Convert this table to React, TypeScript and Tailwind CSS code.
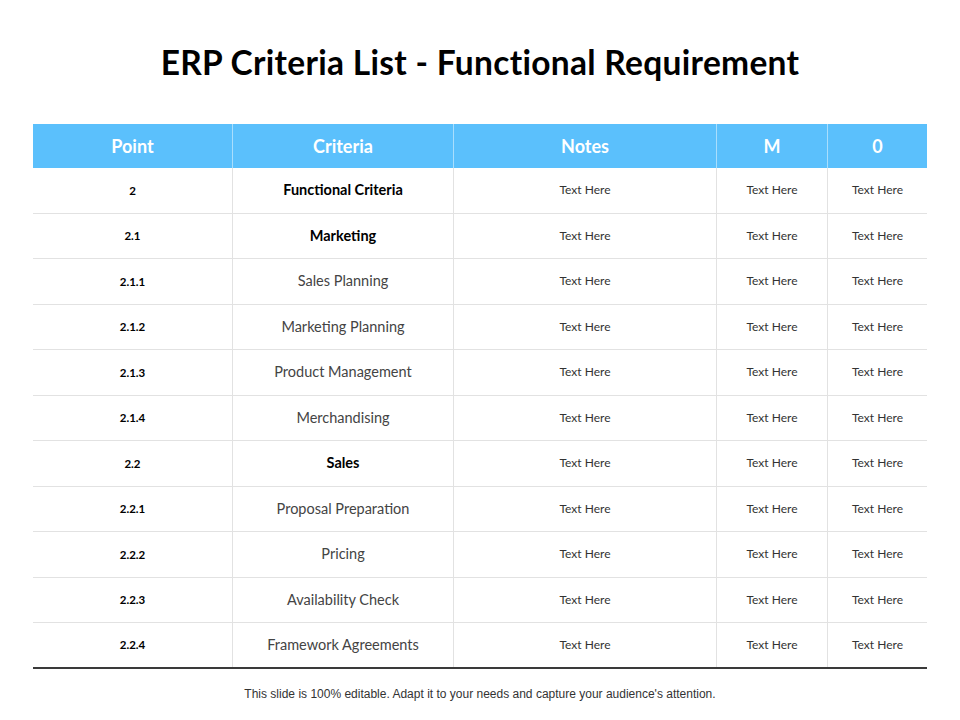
const rows: [string, string, boolean][] = [
  ["2", "Functional Criteria", true],
  ["2.1", "Marketing", true],
  ["2.1.1", "Sales Planning", false],
  ["2.1.2", "Marketing Planning", false],
  ["2.1.3", "Product Management", false],
  ["2.1.4", "Merchandising", false],
  ["2.2", "Sales", true],
  ["2.2.1", "Proposal Preparation", false],
  ["2.2.2", "Pricing", false],
  ["2.2.3", "Availability Check", false],
  ["2.2.4", "Framework Agreements", false],
]

const headers = ["Point", "Criteria", "Notes", "M", "0"]

export default function App() {
  return (
    <div className="w-[960px] h-[720px] bg-white flex flex-col items-center font-['Lato',sans-serif]">
      <h1 className="mt-[40px] h-[44px] flex items-center text-[33.5px] font-bold text-black tracking-[0.3px]">
        ERP Criteria List - Functional Requirement
      </h1>
      <div className="mt-[40px] w-[894px] flex flex-col">
        <div className="grid grid-cols-[199px_221px_263px_111px_100px] h-[44px] bg-[#5bc0fc] text-white font-bold text-[18px]">
          {headers.map((h, i) => (
            <div
              key={h}
              className={`flex items-center justify-center ${i > 0 ? "border-l border-[#a9defd]" : ""}`}
            >
              {h}
            </div>
          ))}
        </div>
        {rows.map(([point, crit, bold], r) => (
          <div
            key={point}
            className={`grid grid-cols-[199px_221px_263px_111px_100px] h-[45.5px] ${
              r === rows.length - 1 ? "border-b-2 border-[#3a3a3a]" : "border-b border-[#e2e2e2]"
            }`}
          >
            <div className="flex items-center justify-center text-[11.5px] font-bold text-black">{point}</div>
            <div
              className={`flex items-center justify-center border-l border-[#e2e2e2] ${
                bold ? "text-[14.5px] font-bold text-black" : "text-[14.5px] text-[#444]"
              }`}
            >
              {crit}
            </div>
            <div className="flex items-center justify-center border-l border-[#e2e2e2] text-[12px] text-[#333]">Text Here</div>
            <div className="flex items-center justify-center border-l border-[#e2e2e2] text-[12px] text-[#333]">Text Here</div>
            <div className="flex items-center justify-center border-l border-[#e2e2e2] text-[12px] text-[#333]">Text Here</div>
          </div>
        ))}
      </div>
      <p className="mt-[16px] text-[12px] text-[#333] font-['Liberation_Sans',sans-serif]">
        This slide is 100% editable. Adapt it to your needs and capture your audience's attention.
      </p>
    </div>
  )
}
